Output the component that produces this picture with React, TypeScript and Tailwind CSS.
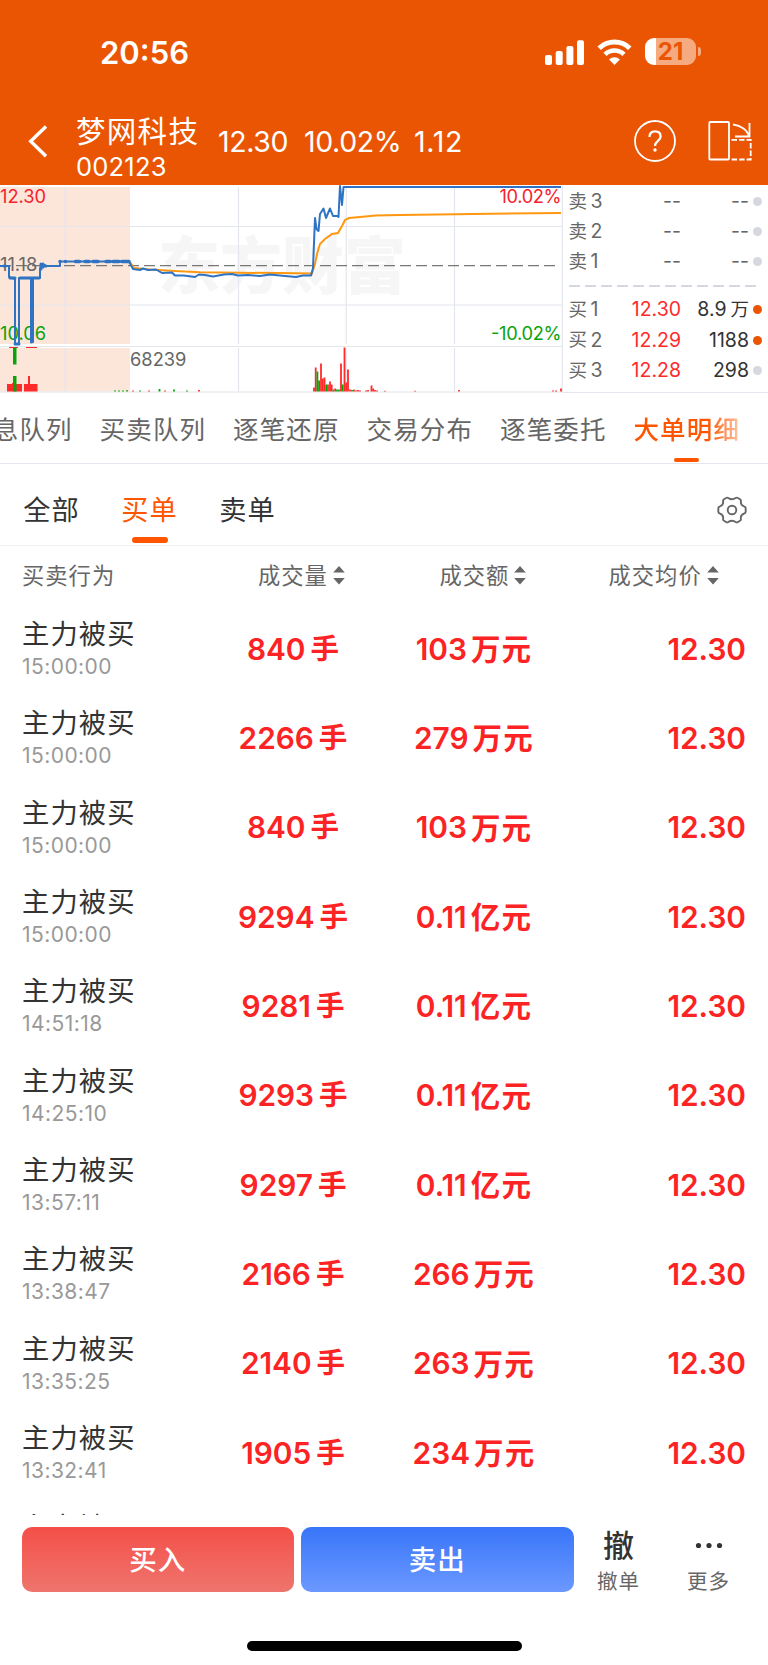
import clsx from "clsx";

const orders = [
  { time: "15:00:00", volume: "840", amount: "103", unit: "万元" },
  { time: "15:00:00", volume: "2266", amount: "279", unit: "万元" },
  { time: "15:00:00", volume: "840", amount: "103", unit: "万元" },
  { time: "15:00:00", volume: "9294", amount: "0.11", unit: "亿元" },
  { time: "14:51:18", volume: "9281", amount: "0.11", unit: "亿元" },
  { time: "14:25:10", volume: "9293", amount: "0.11", unit: "亿元" },
  { time: "13:57:11", volume: "9297", amount: "0.11", unit: "亿元" },
  { time: "13:38:47", volume: "2166", amount: "266", unit: "万元" },
  { time: "13:35:25", volume: "2140", amount: "263", unit: "万元" },
  { time: "13:32:41", volume: "1905", amount: "234", unit: "万元" },
  { time: "13:30:12", volume: "1820", amount: "223", unit: "万元" },
];

const asks = ["3", "2", "1"];

const bids = [
  { level: "1", price: "12.30", volume: "8.9", unit: "万", active: true },
  { level: "2", price: "12.29", volume: "1188", unit: "", active: true },
  { level: "3", price: "12.28", volume: "298", unit: "", active: false },
];

const tabs = ["消息队列", "买卖队列", "逐笔还原", "交易分布", "逐笔委托", "大单明细"];

// x, height, color
const bars: [number, number, string][] = [
  [314, 4, "r"], [315.7, 24, "r"], [317.4, 20, "g"], [319.1, 11, "g"], [321, 28, "r"],
  [322.8, 13, "r"], [324.5, 14, "r"], [326.2, 7, "g"], [328, 7, "r"], [330, 10, "r"],
  [331.7, 7, "r"], [333.4, 2, "g"], [335.2, 3, "r"], [337, 2, "g"], [339, 2, "g"],
  [341, 28, "r"], [342.7, 7, "g"], [344.5, 44, "r"], [346.2, 9, "r"], [348, 22, "r"],
  [350, 2, "r"], [352, 1.5, "g"], [354, 2, "r"], [356, 1, "r"], [358, 1.5, "r"],
  [360, 1, "r"], [366, 1, "r"], [368, 1.5, "r"], [371.5, 6, "r"], [373.2, 3, "r"],
  [375, 1.5, "r"], [377, 1, "r"], [385, 0.7, "r"], [415, 0.7, "r"], [459, 1.5, "r"],
  [553, 1, "r"], [556, 1, "r"], [561, 3, "r"],
  [115, 1, "g"], [119, 1, "g"], [123, 1, "g"], [127, 1.3, "g"], [133, 1, "r"], [140, 1, "g"],
  [149, 1, "r"], [159.5, 2.5, "g"], [165, 1, "r"], [174, 2, "g"], [187, 1, "g"], [199, 1.5, "r"],
];

function StatusBar() {
  return (
    <div className="flex h-[104px] items-start justify-between pl-[100px] pr-[67px]">
      <span className="pt-[33px] text-[31px] font-semibold leading-[40px]">20:56</span>
      <div className="flex items-center pt-[38px]">
        <svg width="39" height="26" viewBox="0 0 39 26" fill="white">
          <rect x="0" y="16" width="7" height="10" rx="2" />
          <rect x="10.7" y="12" width="7" height="14" rx="2" />
          <rect x="21.4" y="7" width="7" height="19" rx="2" />
          <rect x="32" y="1.3" width="7" height="24.7" rx="2" />
        </svg>
        <svg width="35" height="26" viewBox="0 0 35 26" className="ml-[13px]" fill="none" stroke="white">
          <path d="M2.2 9.3a22 22 0 0 1 30.6 0" strokeWidth="5" />
          <path d="M8 15.3a13.6 13.6 0 0 1 19 0" strokeWidth="4.6" />
          <path d="M17.5 26l-5.4-5.6a7.8 7.8 0 0 1 10.8 0z" fill="white" stroke="none" />
        </svg>
        <div className="ml-[13px] flex h-[27px] w-[51px] items-center justify-center overflow-hidden rounded-[9px] bg-[linear-gradient(90deg,#fff_11px,#f5aa80_11px)] text-[24px] font-bold leading-none text-[#ea5504]">
          21
        </div>
        <div className="ml-[2px] h-[9px] w-[3px] rounded-r-full bg-[#f5aa80]" />
      </div>
    </div>
  );
}

function Header() {
  return (
    <header className="h-[185px] bg-[#ea5504] text-white">
      <StatusBar />
      <div className="flex h-[81px] items-start">
        <svg width="76" height="81" fill="none" stroke="white" strokeWidth="3.4">
          <path d="M46 22.5L30.7 37.3 46 52.2" />
        </svg>
        <div className="w-[142px]">
          <div className="pt-[9px] text-[29.5px] leading-[36px] tracking-[1.3px] whitespace-nowrap">梦网科技</div>
          <div className="pt-[2.5px] text-[25.5px] leading-[30px] tracking-[0.2px]">002123</div>
        </div>
        <div className="flex flex-1 pt-[20px] text-[28.5px] leading-[36px] tracking-[-0.4px]">
          <span className="w-[86px]">12.30</span>
          <span className="w-[110px]">10.02%</span>
          <span className="tracking-[0.7px]">1.12</span>
        </div>
        <svg width="134" height="81" viewBox="634 104 134 81" fill="none" stroke="white" strokeWidth="1.8">
          <circle cx="655" cy="141" r="20" />
          <path d="M649.5 137c0-3.6 2.2-5.7 5.6-5.7s5.500 2 5.500 5.100c0 4.600-5.600 4.400-5.600 9.600" strokeWidth="2.3" />
          <circle cx="655" cy="150" r="1.7" fill="white" stroke="none" />
          <rect x="709.3" y="122" width="19.7" height="37.5" rx="1" />
          <path d="M733 124.500c8 1 14.500 5.500 16 12M749.500 123v13.500H735" />
          <path d="M731.500 139.800h19.200v19.700h-19.200" strokeDasharray="5.5 2" />
        </svg>
      </div>
    </header>
  );
}

function PriceChart() {
  return (
    <svg width="563" height="208" viewBox="0 185 563 208" className="shrink-0">
      <rect x="0" y="187" width="130" height="157" fill="#fce6da" />
      <rect x="0" y="348" width="130" height="43.5" fill="#fce6da" />
      <g className="text-[62px] font-black" fill="#f6f6f7">
        <text x="158" y="289">东方财富</text>
      </g>
      <g stroke="#e4e6ee" strokeWidth="1.2">
        <path d="M0 226.500H562M0 305H562M0 346.500H562M0 392H563M562.300 186V392" />
        <path d="M65 187V344M65 348V392M238.500 187V344M238.500 348V392M346.200 187V344M346.200 348V392M454.500 187V344M454.500 348V392" />
      </g>
      <path d="M0 265.600H558" stroke="#777" strokeWidth="1.4" strokeDasharray="11 5" />
      <g className="text-[18.3px]">
        <text x="0" y="202.5" fill="#f5222d" textLength="46">12.30</text>
        <text x="0" y="271" fill="#666">11.18</text>
        <text x="0" y="339.5" fill="#0aa30a">10.06</text>
        <text x="499.500" y="202.5" fill="#f5222d" textLength="62">10.02%</text>
        <text x="491" y="339.5" fill="#0aa30a" textLength="70.500">-10.02%</text>
        <text x="130" y="365.5" fill="#666">68239</text>
      </g>
      <path
        d="M130 262L134 268 150 269.500 175 271 200 272.300 240 272.800 280 273 312 273.500 315 264 317 254 320 244 325 239 332 234 338 233 342 226 345 220 349 218 360 217 376 215.500 400 215 455 214.200 561 213"
        fill="none"
        stroke="#ff9810"
        strokeWidth="2"
      />
      <path
        d="M0 266H9V277L15 279V344H19V278H31V342H33V278H40V269L42 264 46 266H60V261.500H129L133 269 140 270 143 268.500 148 270 156 269.500 162 273 172 272.500 175 275.500 184 275.500 195 277 199 274.500 205 275 213 276.500 224 274.500 232 274 238 275.500 248 275 260 276 270 274.500 285 276 296 277 303 275.500 311 275.500 313 268 315 218 316.500 229 318.500 231 320 214 323.500 208.500 326 218 330 208.500 333 216 337 216 338.500 217 340 186 342 205 343.500 187H561"
        fill="none"
        stroke="#2f73c4"
        strokeWidth="2"
        strokeLinejoin="round"
      />
      <g stroke="#2f73c4" strokeWidth="3" strokeLinecap="round">
        <path d="M4 266h1M10 278h5M20 278h19M31.500 279V342M15 344h4M41 264v5M43 264v3M44 266h2" />
        <path d="M60 261.500h.1M65.500 261.500h.1M75.500 261.500h4M85 261.500h4M93 261.500h5M106 261.500h4M113 261.500h6M122 261.500h7" strokeWidth="3.5" />
      </g>
      <g fill="#ff2a2a">
        <path d="M7 384H12V383H16V384H22V391.500H7zM24 384H28V376H30V384H37.500V391.500H24z" />
        <path d="M9 347H18V348H9zM26 347H37V348H26z" />
      </g>
      <path d="M13 347.500H16.500V364.500H13zM13 376H16.500V391.500H13z" fill="#0aa30a" />
      {bars.map(([x, h, c]) => (
        <rect key={x} x={x - 0.9} y={391.5 - h} width="1.8" height={h} fill={c === "r" ? "#ff2a2a" : "#0aa30a"} />
      ))}
    </svg>
  );
}

function OrderBook() {
  return (
    <div className="flex flex-1 flex-col border-b border-[#e4e6ee] pl-[5.5px] pr-[6px] text-[19.5px] text-[#666]">
      {asks.map((level) => (
        <div key={level} className="flex h-[30.2px] shrink-0 items-center first:mt-[1.5px]">
          <span className="flex w-[42px] items-center gap-[3.5px]">
            <span className="text-[18.5px]">卖</span>
            {level}
          </span>
          <span className="w-[70.5px] text-right">--</span>
          <span className="flex-1 text-right">--</span>
          <span className="ml-[4px] size-[9px] rounded-full bg-[#d5d8de]" />
        </div>
      ))}
      <svg width="190" height="17.5" className="shrink-0">
        <path d="M0 9H188" stroke="#d5d8de" strokeWidth="2" strokeDasharray="11 5" />
      </svg>
      {bids.map((bid) => (
        <div key={bid.level} className="flex h-[30.4px] shrink-0 items-center">
          <span className="flex w-[42px] items-center gap-[3.5px]">
            <span className="text-[18.5px]">买</span>
            {bid.level}
          </span>
          <span className="w-[70.5px] text-right text-[#ff2a2a]">{bid.price}</span>
          <span className="flex flex-1 items-center justify-end gap-[4px] text-[#333]">
            {bid.volume}
            {bid.unit && <span className="text-[18.5px]">{bid.unit}</span>}
          </span>
          <span className={clsx("ml-[4px] size-[9px] rounded-full", bid.active ? "bg-[#ea5504]" : "bg-[#d5d8de]")} />
        </div>
      ))}
    </div>
  );
}

function DetailTabs() {
  return (
    <nav className="flex h-[71px] gap-[26.7px] overflow-hidden border-b border-[#e4e6ee] text-[25.5px] text-[#666]">
      {tabs.map((tab, i) => {
        const active = i === tabs.length - 1;
        return (
          <div
            key={tab}
            className={clsx(
              "flex w-[106.8px] shrink-0 flex-col items-center justify-between pt-[19px] tracking-[1.2px] whitespace-nowrap",
              i === 0 && "-ml-[34px]"
            )}
          >
            <span
              className={clsx(
                "leading-[36px]",
                active &&
                  "bg-[linear-gradient(90deg,#ff5500_70%,#ffc6a8_100%)] bg-clip-text font-medium text-transparent"
              )}
            >
              {tab}
            </span>
            {active && <span className="mb-px h-[4px] w-[25px] rounded-full bg-[#ff5500]" />}
          </div>
        );
      })}
    </nav>
  );
}

function FilterTabs() {
  return (
    <div className="flex h-[82px] border-b border-[#f0f1f4] pl-[23.5px] text-[27.2px] text-[#333]">
      {["全部", "买单", "卖单"].map((name) => {
        const active = name === "买单";
        return (
          <div
            key={name}
            className={clsx("mr-[42px] flex w-[56px] flex-col items-center pt-[28px]", active && "text-[#ff5500]")}
          >
            <span className="leading-[38px] tracking-[1px] whitespace-nowrap">{name}</span>
            {active && <span className="mt-[7px] h-[5.5px] w-[36px] rounded-full bg-[#ff5500]" />}
          </div>
        );
      })}
      <svg
        width="30"
        height="28"
        viewBox="0 0 30 28"
        className="ml-auto mr-[21px] mt-[32px]"
        fill="none"
        stroke="#666"
        strokeWidth="1.9"
      >
        <path d="M9 2Q10.200 1.200 11.300 2 15 4.600 18.700 2 19.800 1.200 21 2L23 3.200Q24.200 4 23.900 5.300 23.300 9 27 10.400 28.700 11 28.700 12.300V15.700Q28.700 17 27 17.600 23.300 19 23.900 22.700 24.200 24 23 24.800L21 26Q19.800 26.800 18.700 26 15 23.400 11.300 26 10.200 26.800 9 26L7 24.800Q5.800 24 6.100 22.700 6.700 19 3 17.600 1.300 17 1.300 15.700V12.300Q1.300 11 3 10.400 6.700 9 6.100 5.300 5.800 4 7 3.200Z" />
        <circle cx="15" cy="14" r="4.3" />
      </svg>
    </div>
  );
}

function SortLabel({ label }: { label: string }) {
  return (
    <span className="flex items-center gap-[5px] whitespace-nowrap">
      {label}
      <svg width="12" height="20" viewBox="0 0 12 20" fill="#666">
        <path d="M6 1L11.800 7.500H.2zM6 19.500L.2 13H11.800z" />
      </svg>
    </span>
  );
}

function OrderTable() {
  return (
    <main className="h-[969px] overflow-hidden">
      <div className="flex h-[58.5px] items-center pl-[22px] text-[22.3px] tracking-[1px] text-[#666]">
        <span className="w-[236px]">买卖行为</span>
        <span className="w-[181.5px]">
          <SortLabel label="成交量" />
        </span>
        <span className="w-[169px]">
          <SortLabel label="成交额" />
        </span>
        <SortLabel label="成交均价" />
      </div>
      {orders.map((order, i) => (
        <div key={i} className="flex h-[89.34px] items-center pl-[22px] pr-[22px]">
          <div className="w-[181px]">
            <div className="text-[27.3px] leading-[36px] tracking-[1.1px] text-[#333]">主力被买</div>
            <div className="text-[21px] leading-[28px] tracking-[0.45px] text-[#999]">{order.time}</div>
          </div>
          <div className="flex w-[180px] items-center justify-center gap-[5px] text-[29.8px] font-semibold text-[#fb2323]">
            {order.volume}
            <span className="text-[28.5px]">手</span>
          </div>
          <div className="flex w-[182px] items-center justify-center gap-[4px] text-[29.8px] font-semibold text-[#fb2323]">
            {order.amount}
            <span className="text-[29.5px] tracking-[1.2px]">{order.unit}</span>
          </div>
          <div className="flex-1 text-right text-[29.8px] font-semibold text-[#fb2323]">12.30</div>
        </div>
      ))}
    </main>
  );
}

function TradeBar() {
  return (
    <footer className="h-[150px] pl-[21.5px] pt-[12px]">
      <div className="flex h-[65px]">
        <button className="w-[272.5px] rounded-[10px] bg-linear-to-b from-[#f44e48] to-[#ee746d] pt-[2px] text-[27.5px] font-medium tracking-[1px] text-white">
          买入
        </button>
        <button className="ml-[7px] w-[272.5px] rounded-[10px] bg-linear-to-b from-[#3875f9] to-[#6b98ff] pt-[2px] text-[27.5px] font-medium tracking-[1px] text-white">
          卖出
        </button>
        <div className="ml-[15px] flex w-[60px] flex-col items-center text-[#333]">
          <span className="text-[31px] leading-[38px] font-medium">撤</span>
          <span className="mt-[2px] text-[20.5px] leading-[30px] tracking-[1px] text-[#666]">撤单</span>
        </div>
        <div className="ml-[30px] flex w-[60px] flex-col items-center text-[#333]">
          <svg width="30" height="38" className="shrink-0">
            <circle cx="4.5" cy="18.5" r="2.6" fill="#333" />
            <circle cx="15" cy="18.5" r="2.6" fill="#333" />
            <circle cx="25.5" cy="18.5" r="2.6" fill="#333" />
          </svg>
          <span className="mt-[2px] text-[20.5px] leading-[30px] tracking-[1px] text-[#666]">更多</span>
        </div>
      </div>
      <div className="ml-[225px] mt-[49px] h-[9.5px] w-[275px] rounded-full bg-black" />
    </footer>
  );
}

export default function App() {
  return (
    <div
      lang="zh-CN"
      className="h-[1665px] w-[768px] overflow-hidden bg-white font-[Inter,'Noto_Sans_CJK_SC',sans-serif]"
    >
      <Header />
      <section className="flex h-[208px]">
        <PriceChart />
        <OrderBook />
      </section>
      <DetailTabs />
      <FilterTabs />
      <OrderTable />
      <TradeBar />
    </div>
  );
}
